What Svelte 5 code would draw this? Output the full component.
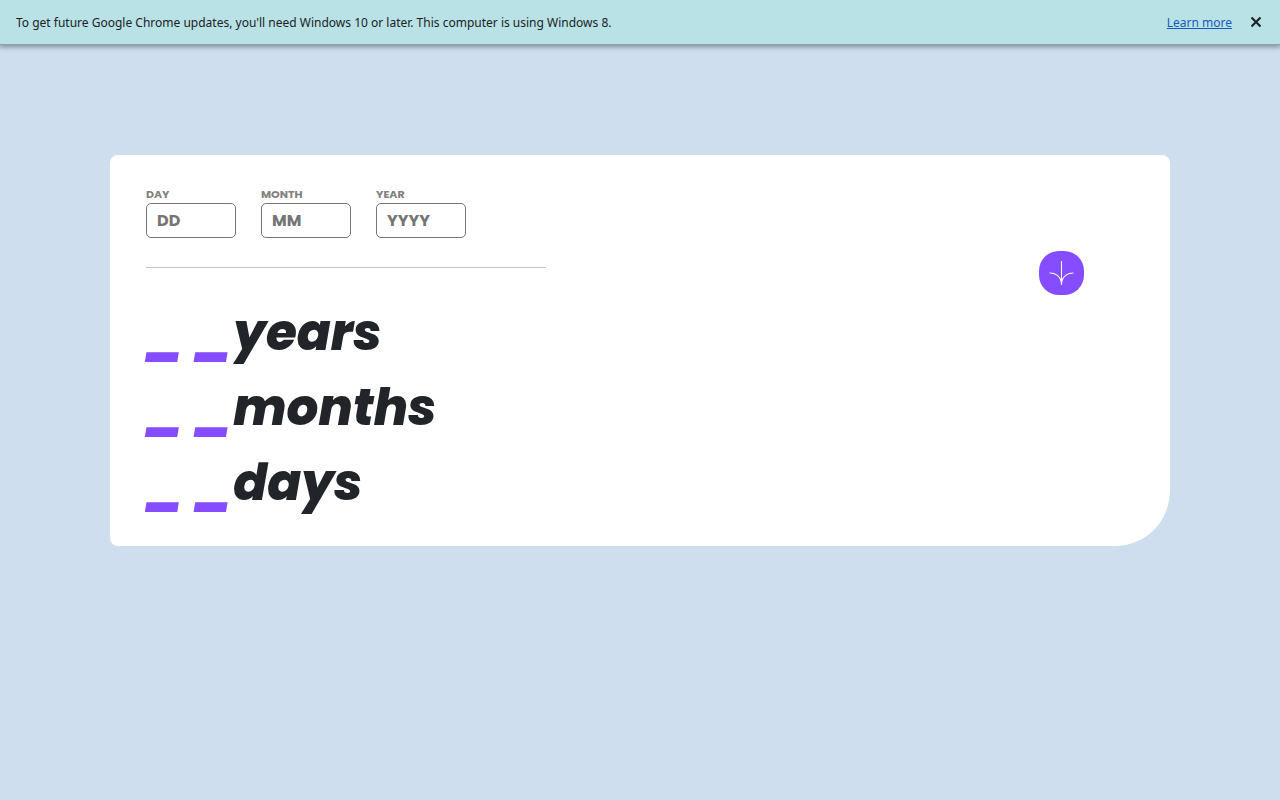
<script>
  const fields = [
    { id: 'day', label: 'DAY', hint: 'DD' },
    { id: 'month', label: 'MONTH', hint: 'MM' },
    { id: 'year', label: 'YEAR', hint: 'YYYY' }
  ];
  const units = ['years', 'months', 'days'];
  let showBanner = $state(true);
</script>

{#if showBanner}
  <aside class="banner">
    <p>To get future Google Chrome updates, you'll need Windows 10 or later. This computer is using Windows 8.</p>
    <a href="#learn">Learn more</a>
    <button class="close" type="button" aria-label="Close" onclick={() => (showBanner = false)}>
      <svg width="12" height="12" viewBox="0 0 12 12" aria-hidden="true">
        <path d="M1.5 1.5 10.5 10.5M10.5 1.5 1.5 10.5" stroke="#1f2426" stroke-width="2.2" />
      </svg>
    </button>
  </aside>
{/if}

<main class="card">
  <form class="form" onsubmit={(e) => e.preventDefault()}>
    <div class="fields">
      {#each fields as field}
        <div class="field">
          <label for={field.id}>{field.label}</label>
          <input id={field.id} type="text" placeholder={field.hint} />
        </div>
      {/each}
    </div>
    <button class="submit" type="submit" aria-label="Calculate age">
      <svg width="25" height="24" viewBox="0 0 46 44" fill="none" stroke="#fff" stroke-width="2" aria-hidden="true">
        <path d="M1 22.019C8.333 21.686 23 25.616 23 44M23 44V0M45 22.019C37.667 21.686 23 25.616 23 44" />
      </svg>
    </button>
  </form>
  <hr />
  <section class="results">
    {#each units as unit}
      <p><span class="value">_ _</span>{unit}</p>
    {/each}
  </section>
</main>

<style>
  :global(body) {
    background: #cedeee;
    font-family: Poppins, Inter, sans-serif;
  }
  .banner {
    display: flex;
    align-items: center;
    box-sizing: border-box;
    height: 44px;
    padding: 0 16px;
    background: #b8e2e5;
    box-shadow: 0 1px 0 #8da3ac, 0 2px 5px 1px #7f8c9b;
    font: 12px/20px 'Segoe UI', 'Noto Sans', sans-serif;
    color: #202124;
  }
  .banner p {
    flex: 1;
    margin: 0;
  }
  .banner p,
  .banner a {
    padding-top: 2px;
  }
  .banner a {
    color: #185abc;
  }
  .close {
    display: flex;
    margin-left: 16px;
    padding: 2px;
    border: 0;
    background: none;
  }
  .card {
    box-sizing: border-box;
    max-width: 1060px;
    margin: 111px auto 0;
    padding: 31px 36px 26px;
    background: #fff;
    border-radius: 8px 8px 55px 8px;
  }
  .form {
    display: flex;
    justify-content: space-between;
    padding-right: 50px;
  }
  .fields {
    display: flex;
    gap: 25px;
  }
  .field {
    display: flex;
    flex-direction: column;
    gap: 1px;
    width: 90px;
  }
  label {
    color: #808080;
    font-size: 11px;
    font-weight: 700;
    line-height: 16px;
  }
  input {
    box-sizing: border-box;
    width: 100%;
    height: 35px;
    padding: 0 10px;
    border: 1px solid #757575;
    border-radius: 5px;
    font: 700 16px/24px Poppins, Inter, sans-serif;
  }
  input::placeholder {
    color: #757575;
    opacity: 1;
  }
  .submit {
    display: flex;
    align-items: center;
    justify-content: center;
    width: 45px;
    height: 44px;
    margin: 65px 0 -57px;
    padding: 0;
    border: 0;
    border-radius: 20px;
    background: #854dff;
  }
  hr {
    width: 400px;
    max-width: 100%;
    margin: 29px 0 27px;
    border: 0;
    border-top: 1px solid #c2c2c2;
  }
  .results p {
    margin: 0;
    color: #212529;
    font-size: 50px;
    font-style: italic;
    font-weight: 800;
    line-height: 75px;
  }
  .value {
    color: #854dff;
  }
</style>
